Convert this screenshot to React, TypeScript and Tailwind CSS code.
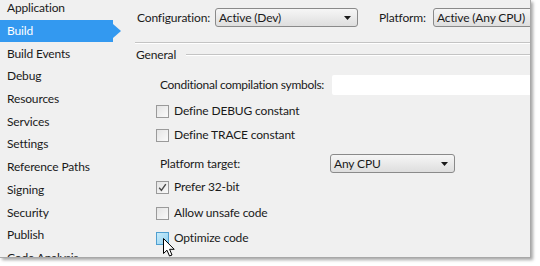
import React from 'react';

const font = { fontFamily: 'Lato, "Open Sans", sans-serif' };

const navItems = [
  'Application',
  'Build',
  'Build Events',
  'Debug',
  'Resources',
  'Services',
  'Settings',
  'Reference Paths',
  'Signing',
  'Security',
  'Publish',
  'Code Analysis',
];

function Caret() {
  return (
    <svg width="7" height="4" viewBox="0 0 7 4" className="shrink-0">
      <path d="M0 0h7L3.5 4z" fill="#1a1a1a" />
    </svg>
  );
}

function Dropdown({ value, className }: { value: string; className: string }) {
  return (
    <div
      className={`flex h-[19px] shrink-0 items-center justify-between rounded-[3px] border border-[#8a8a8a] bg-gradient-to-b from-[#f6f6f6] to-[#dedede] pl-[3px] pr-[6px] ${className}`}
    >
      <span className="text-[12px] leading-none text-[#1a1a1a]">{value}</span>
      <Caret />
    </div>
  );
}

function Checkbox({ checked, hover }: { checked?: boolean; hover?: boolean }) {
  return (
    <div
      className={`flex h-[13px] w-[13px] shrink-0 items-center justify-center border ${
        hover ? 'border-[#4f9fd0] bg-gradient-to-br from-[#c9ecfb] to-[#8fd0f0]' : 'border-[#9a9a9a] bg-gradient-to-br from-[#e4e4e4] to-[#fafafa]'
      }`}
    >
      {checked && (
        <svg width="9" height="9" viewBox="0 0 9 9">
          <path d="M1.2 4.8l2.2 2.6L7.8 1.2" fill="none" stroke="#4a4a4a" strokeWidth="1.4" />
        </svg>
      )}
    </div>
  );
}

function CheckRow({ label, checked, hover, className }: { label: string; checked?: boolean; hover?: boolean; className: string }) {
  return (
    <div className={`flex h-[16px] shrink-0 items-center gap-[5px] pl-[31px] ${className}`}>
      <Checkbox checked={checked} hover={hover} />
      <span className="whitespace-nowrap text-[12px] text-[#1a1a1a]">{label}</span>
    </div>
  );
}

export default function App() {
  return (
    <div className="h-[266px] w-[540px] overflow-hidden bg-white tracking-[-0.15px]" style={font}>
      <div className="relative flex h-[258px] w-[531px] overflow-hidden border-r border-b border-[#a8a8a8] bg-[#f0f0f0] shadow-[2px_2px_3px_rgba(0,0,0,0.35)]">
        {/* sidebar */}
        <div className="mt-[-3px] flex w-[125px] shrink-0 flex-col">
          {navItems.map((item) =>
            item === 'Build' ? (
              <div key={item} className="relative flex h-[22.7px] shrink-0 items-center">
                <div className="flex h-full w-[113px] items-center bg-[#3399f0] pl-[7px] text-[12px] text-white">{item}</div>
                <svg width="8" height="14" viewBox="0 0 8 14" className="shrink-0">
                  <path d="M0 0L8 7L0 14z" fill="#3399f0" />
                </svg>
              </div>
            ) : (
              <div key={item} className="flex h-[22.7px] shrink-0 items-center whitespace-nowrap pl-[7px] text-[12px] text-[#1a1a1a]">
                {item}
              </div>
            )
          )}
        </div>

        {/* main */}
        <div className="flex min-w-0 flex-1 flex-col text-[#1a1a1a]">
          <div className="mt-[8px] flex h-[19px] shrink-0 items-center whitespace-nowrap">
            <span className="ml-[12px] w-[78px] shrink-0 text-[12px]">Configuration:</span>
            <Dropdown value="Active (Dev)" className="w-[143px]" />
            <span className="ml-[21px] w-[54px] shrink-0 text-[12px]">Platform:</span>
            <div className="flex h-[19px] w-[130px] shrink-0 items-center rounded-l-[3px] border border-[#8a8a8a] bg-gradient-to-b from-[#f6f6f6] to-[#dedede] pl-[3px]">
              <span className="text-[12px] leading-none">Active (Any CPU)</span>
            </div>
          </div>

          <div className="ml-[10px] mt-[15px] h-[2px] shrink-0 border-t border-b border-t-[#c4c4c4] border-b-white" />

          <div className="mt-[3px] flex h-[16px] shrink-0 items-center">
            <span className="ml-[11px] text-[12px]">General</span>
            <div className="ml-[10px] h-[2px] flex-1 border-t border-b border-t-[#c4c4c4] border-b-white" />
          </div>

          <div className="mt-[12px] flex h-[20px] shrink-0 items-center">
            <span className="ml-[35px] w-[172px] shrink-0 whitespace-nowrap text-[12px] tracking-[-0.3px]">Conditional compilation symbols:</span>
            <div className="h-[20px] flex-1 rounded-l-[2px] bg-white" />
          </div>

          <CheckRow label="Define DEBUG constant" className="mt-[8px]" />
          <CheckRow label="Define TRACE constant" className="mt-[8px]" />

          <div className="mt-[11px] flex h-[19px] shrink-0 items-center">
            <span className="ml-[35px] w-[170px] shrink-0 text-[12px]">Platform target:</span>
            <Dropdown value="Any CPU" className="w-[125px]" />
          </div>

          <CheckRow label="Prefer 32-bit" checked className="mt-[6px]" />
          <CheckRow label="Allow unsafe code" className="mt-[10px]" />
          <CheckRow label="Optimize code" hover className="mt-[9px]" />
        </div>

        {/* mouse cursor */}
        <svg width="13" height="20" viewBox="0 0 13 20" className="absolute left-[163px] top-[238px]">
          <path d="M0.5 0.5V15.5L4 12.2L6.5 18L9 17L6.6 11.3H11.2Z" fill="white" stroke="black" strokeWidth="1" strokeLinejoin="round" />
        </svg>
      </div>
    </div>
  );
}
